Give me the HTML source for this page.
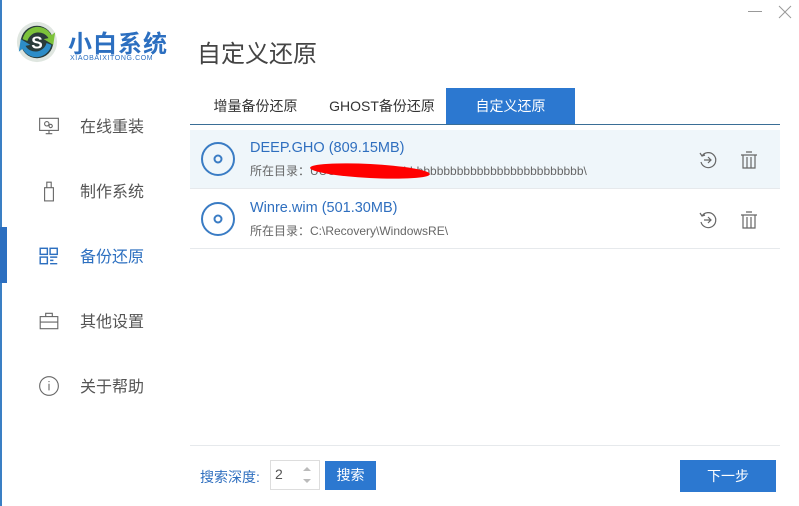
<!DOCTYPE html>
<html><head><meta charset="utf-8"><style>
*{margin:0;padding:0;box-sizing:border-box}
body{width:799px;height:506px;background:#fff;font-family:"Liberation Sans","Noto Sans CJK SC",sans-serif;position:relative;overflow:hidden;color:#555}
.abs{position:absolute}
.lb{left:0;top:0;width:2px;height:506px;background:#3a7fc4}
.nav{left:0;width:190px;height:40px;font-size:16px;color:#555}
.nav span{position:absolute;left:80px;top:7px}
.nav svg{position:absolute;left:38px;top:9px}
.tab{top:88px;height:36px;font-size:14px;line-height:36px;text-align:center;color:#333}
.row{left:190px;width:590px;height:58px}
.ttl{font-size:14.5px;color:#2f6fbf;position:absolute;left:60px;top:10px}
.pth{font-size:12px;color:#666;position:absolute;left:60px;top:32px}
</style></head><body>
<div class="abs lb"></div>
<!-- logo -->
<svg class="abs" style="left:15px;top:20px" width="44" height="44" viewBox="0 0 46 46">
<circle cx="23" cy="23" r="21" fill="#dfe6e0"/>
<circle cx="23" cy="23" r="17" fill="#2a3b3a"/>
<path d="M8 20 A16 16 0 0 1 38 16 L42 13 L40 26 L30 20 L35 19 A12 12 0 0 0 13 22Z" fill="#7cc23a"/>
<path d="M38 26 A16 16 0 0 1 8 30 L4 33 L6 20 L16 26 L11 27 A12 12 0 0 0 33 24Z" fill="#2d8dc8"/>
<text x="23" y="30" font-size="18" font-weight="bold" fill="#fff" text-anchor="middle" font-family="Liberation Sans">S</text>
</svg>
<div class="abs" style="left:68px;top:24px;font-size:24px;font-weight:bold;color:#2c6fc0;letter-spacing:1px">小白系统</div>
<div class="abs" style="left:70px;top:55px;font-size:7px;color:#2c6fc0;letter-spacing:0.6px">XIAOBAIXITONG.COM</div>
<!-- window controls -->
<div class="abs" style="left:748px;top:11px;width:14px;height:1px;background:#999"></div>
<svg class="abs" style="left:778px;top:5px" width="14" height="14"><path d="M1 1L13 13M13 1L1 13" stroke="#999" stroke-width="1"/></svg>
<div class="abs" style="left:197px;top:34px;font-size:24px;color:#444">自定义还原</div>
<!-- nav -->
<div class="abs nav" style="top:106px"><svg width="22" height="22" viewBox="0 0 20 20" fill="none" stroke="#666"><rect x="1.5" y="3" width="17" height="11"/><circle cx="8" cy="8" r="2"/><circle cx="11.5" cy="10" r="1.5"/><path d="M10 14v3M7 17h6"/></svg><span>在线重装</span></div>
<div class="abs nav" style="top:171px"><svg width="22" height="22" viewBox="0 0 20 20" fill="none" stroke="#666"><rect x="6" y="7" width="8" height="12"/><path d="M8 7V2h4v5"/></svg><span>制作系统</span></div>
<div class="abs" style="left:0;top:227px;width:7px;height:56px;background:#2c6fc0"></div>
<div class="abs nav" style="top:236px;color:#2c6fc0"><svg width="22" height="22" viewBox="0 0 20 20" fill="none" stroke="#2c6fc0" stroke-width="1.3"><rect x="2" y="3" width="6.5" height="5.5"/><rect x="11" y="3" width="6.5" height="5.5"/><rect x="2" y="11" width="6.5" height="6"/><path d="M11 11h6.5M11 14h3M11 17h6.5"/></svg><span>备份还原</span></div>
<div class="abs nav" style="top:301px"><svg width="22" height="22" viewBox="0 0 20 20" fill="none" stroke="#666"><rect x="2" y="6" width="16" height="11"/><path d="M7 6V3h6v3M2 11h16"/></svg><span>其他设置</span></div>
<div class="abs nav" style="top:366px"><svg width="22" height="22" viewBox="0 0 20 20" fill="none" stroke="#666"><circle cx="10" cy="10" r="8.5"/><path d="M10 8v6M10 5.5v1"/></svg><span>关于帮助</span></div>
<!-- tabs -->
<div class="abs tab" style="left:198px;width:115px">增量备份还原</div>
<div class="abs tab" style="left:320px;width:124px">GHOST备份还原</div>
<div class="abs tab" style="left:446px;width:129px;background:#2c78d0;color:#fff">自定义还原</div>
<div class="abs" style="left:190px;top:124px;width:590px;height:1px;background:#3a6e96"></div>
<!-- rows -->
<div class="abs row" style="top:130px;background:#eff6fa">
<svg class="abs" style="left:10px;top:11px" width="36" height="36"><circle cx="18" cy="18" r="16" fill="none" stroke="#3a7cc4" stroke-width="2"/><circle cx="18" cy="18" r="3.5" fill="none" stroke="#3a7cc4" stroke-width="2"/></svg>
<div class="ttl">DEEP.GHO (809.15MB)</div>
<div class="pth">所在目录：UUUUUUUUUUbbbbbbbbbbbbbbbbbbbbbbbbbbbb\</div>
<div class="abs" style="left:120px;top:34px;width:120px;height:14px;background:#f00;border-radius:50%;transform:rotate(3deg)"></div>
</div>
<div class="abs" style="left:190px;top:188px;width:590px;height:1px;background:#e6e9ec"></div>
<div class="abs row" style="top:190px">
<svg class="abs" style="left:10px;top:11px" width="36" height="36"><circle cx="18" cy="18" r="16" fill="none" stroke="#3a7cc4" stroke-width="2"/><circle cx="18" cy="18" r="3.5" fill="none" stroke="#3a7cc4" stroke-width="2"/></svg>
<div class="ttl">Winre.wim (501.30MB)</div>
<div class="pth">所在目录：C:\Recovery\WindowsRE\</div>
</div>
<div class="abs" style="left:190px;top:248px;width:590px;height:1px;background:#e6e9ec"></div>
<!-- action icons -->
<svg class="abs" style="left:698px;top:150px" width="20" height="20" viewBox="0 0 20 20" fill="none" stroke="#666" stroke-width="1.2"><path d="M4 6A7.5 7.5 0 1 1 3 12"/><path d="M2 3l2 3 3-1"/><path d="M6 10h7M10 7l3 3-3 3"/></svg>
<svg class="abs" style="left:739px;top:150px" width="20" height="20" viewBox="0 0 20 20" fill="none" stroke="#666" stroke-width="1.2"><path d="M7 2h6M2 5h16M4 5v13h12V5M8 7v11M12 7v11"/></svg>
<svg class="abs" style="left:698px;top:210px" width="20" height="20" viewBox="0 0 20 20" fill="none" stroke="#666" stroke-width="1.2"><path d="M4 6A7.5 7.5 0 1 1 3 12"/><path d="M2 3l2 3 3-1"/><path d="M6 10h7M10 7l3 3-3 3"/></svg>
<svg class="abs" style="left:739px;top:210px" width="20" height="20" viewBox="0 0 20 20" fill="none" stroke="#666" stroke-width="1.2"><path d="M7 2h6M2 5h16M4 5v13h12V5M8 7v11M12 7v11"/></svg>
<!-- footer -->
<div class="abs" style="left:190px;top:445px;width:590px;height:1px;background:#e6e9ec"></div>
<div class="abs" style="left:200px;top:467px;font-size:14px;color:#2f6fbf">搜索深度:</div>
<div class="abs" style="left:270px;top:460px;width:50px;height:30px;border:1px solid #ddd"></div>
<div class="abs" style="left:275px;top:466px;font-size:14px;color:#555">2</div>
<svg class="abs" style="left:301px;top:463px" width="12" height="24"><path d="M2 8l4-4 4 4z" fill="#bbb"/><path d="M2 16l4 4 4-4z" fill="#bbb"/></svg>
<div class="abs" style="left:325px;top:461px;width:51px;height:29px;background:#2c78d0;color:#fff;font-size:14px;line-height:29px;text-align:center">搜索</div>
<div class="abs" style="left:680px;top:460px;width:96px;height:32px;background:#2c78d0;color:#fff;font-size:14px;line-height:32px;text-align:center">下一步</div>
</body></html>
